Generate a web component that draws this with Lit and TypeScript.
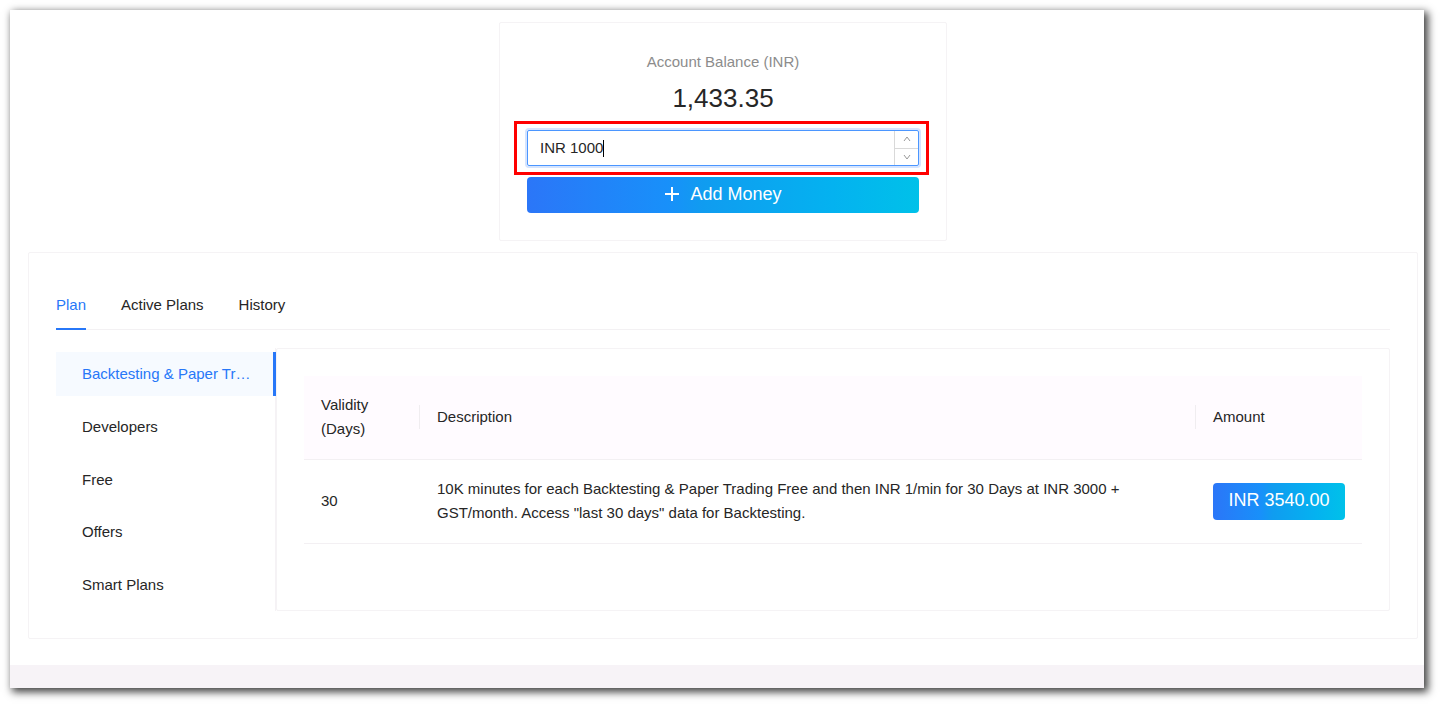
import { LitElement, html, css } from "lit";
import { customElement, state } from "lit/decorators.js";

const sections = ["Backtesting & Paper Trading", "Developers", "Free", "Offers", "Smart Plans"];
const tabs = ["Plan", "Active Plans", "History"];
const plans = [
  {
    days: 30,
    description:
      '10K minutes for each Backtesting & Paper Trading Free and then INR 1/min for 30 Days at INR 3000 + GST/month. Access "last 30 days" data for Backtesting.',
    amount: "INR 3540.00",
  },
];

@customElement("app-root")
export class AppRoot extends LitElement {
  @state() tab = 0;
  @state() section = 0;
  @state() amount = 1000;

  static styles = css`
    * { box-sizing: border-box; }
    :host {
      display: block;
      padding: 10px 16px 16px 10px;
      background: #fff;
      color: #262626;
      font: 15px/24px "Liberation Sans", Arial, sans-serif;
    }
    button, input { font: inherit; color: inherit; border: 0; margin: 0; padding: 0; background: none; }
    button { cursor: pointer; }
    .page {
      background: #fff;
      box-shadow: 3px 3px 8px 1px rgba(0, 0, 0, 0.75);
    }
    main {
      display: flex;
      flex-direction: column;
      gap: 11px;
      padding: 12px 6px 26px 18px;
    }
    .card { border: 1px solid #f5f3f5; border-radius: 2px; padding: 27px; }
    .balance {
      align-self: center;
      display: flex;
      flex-direction: column;
      width: 448px;
      max-width: 100%;
      text-align: center;
    }
    .caption { color: #8c8c8c; }
    .value { font-size: 26px; line-height: 40px; margin: 4px 0 12px; }
    .field {
      position: relative;
      display: flex;
      height: 36px;
      margin-bottom: 11px;
      border: 1px solid #4b96ff;
      border-radius: 2px;
      box-shadow: 0 0 0 2px #d5e4fe;
    }
    .field::after {
      content: "";
      position: absolute;
      inset: -10px -11px -10px -14px;
      border: 3px solid #f00;
      pointer-events: none;
    }
    .entry { flex: 1; display: flex; align-items: center; padding-left: 12px; cursor: text; }
    .entry input { field-sizing: content; width: auto; outline: 0; caret-color: transparent; }
    .caret { width: 1px; height: 17px; background: #000; }
    .steps { display: flex; flex-direction: column; width: 24px; border-left: 1px solid #d9d9d9; }
    .steps button { flex: 1; display: grid; place-items: center; }
    .steps button + button { border-top: 1px solid #d9d9d9; }
    .steps svg { width: 8px; height: 8px; fill: none; stroke: #999; stroke-width: 1; }
    .primary {
      display: flex;
      align-items: center;
      justify-content: center;
      gap: 10px;
      height: 36px;
      padding: 0 16px 2px;
      border-radius: 4px;
      background: linear-gradient(90deg, #2b76f8, #1890fa 36%, #109cf0 45%, #04b2f0 78%, #00c1e9);
      color: #fff;
      font-size: 18px;
      white-space: nowrap;
    }
    .primary svg { width: 16px; height: 16px; stroke: #fff; stroke-width: 2; }
    .tabs { display: flex; gap: 35px; border-bottom: 1px solid #f3f1f3; }
    .tabs button { padding: 13px 0 11px; border-bottom: 2px solid transparent; margin-bottom: -1px; }
    .tabs .on { color: #2777f8; border-color: #2777f8; }
    .body { display: flex; padding-top: 18px; }
    nav {
      display: flex;
      flex-direction: column;
      justify-content: space-between;
      width: 220px;
      flex: none;
      padding: 4px 0;
      box-shadow: inset -1px 0 #f5f2f5;
    }
    nav button {
      height: 44px;
      padding: 0 17px 0 26px;
      border-right: 3px solid transparent;
      text-align: left;
      white-space: nowrap;
      overflow: hidden;
      text-overflow: ellipsis;
    }
    nav .on { background: #f6faff; color: #2777f8; border-color: #2777f8; }
    .plans { flex: 1; padding-bottom: 66px; }
    table { width: 100%; border-collapse: separate; border-spacing: 0; text-align: left; }
    th, td { padding: 17px 17px 18px; border-bottom: 1px solid #f3f0f3; font-weight: 400; }
    th { background: #fffbff; }
    th.split { padding-right: 0; }
    th.split div { display: flex; align-items: center; justify-content: space-between; gap: 16px; }
    th.split div::after { content: ""; flex: none; width: 1px; height: 24px; background: #f0edf0; }
    .days { width: 116px; }
    .amount { width: 166px; }
    td .primary { width: 132px; height: 37px; }
    footer { height: 23px; background: #f7f3f7; }
  `;

  render() {
    return html`
      <div class="page">
        <main>
          <section class="card balance">
            <label class="caption" for="amount">Account Balance (INR)</label>
            <div class="value">1,433.35</div>
            <div class="field">
              <label class="entry">
                <input id="amount" aria-label="Amount" .value=${`INR ${this.amount}`}
                  @change=${(e: Event) => {
                    this.amount = Number((e.target as HTMLInputElement).value.replace(/\D/g, ""));
                  }} />
                <span class="caret"></span>
              </label>
              <div class="steps">
                <button aria-label="Increase" @click=${() => this.amount++}>
                  <svg viewBox="0 0 8 8"><path d="M1 6 4 2 7 6" /></svg>
                </button>
                <button aria-label="Decrease" @click=${() => this.amount--}>
                  <svg viewBox="0 0 8 8"><path d="M1 2 4 6 7 2" /></svg>
                </button>
              </div>
            </div>
            <button class="primary">
              <svg viewBox="0 0 16 16"><path d="M8 1V15M1 8H15" /></svg>
              Add Money
            </button>
          </section>

          <section class="card">
            <div class="tabs" role="tablist">
              ${tabs.map((t, i) => html`<button role="tab" aria-selected=${i === this.tab}
                class=${i === this.tab ? "on" : ""} @click=${() => (this.tab = i)}>${t}</button>`)}
            </div>
            <div class="body">
              <nav>
                ${sections.map((s, i) => html`<button class=${i === this.section ? "on" : ""}
                  @click=${() => (this.section = i)}>${s}</button>`)}
              </nav>
              <div class="card plans">
                <table>
                  <thead>
                    <tr>
                      <th class="days split"><div>Validity (Days)</div></th>
                      <th class="split"><div>Description</div></th>
                      <th class="amount">Amount</th>
                    </tr>
                  </thead>
                  <tbody>
                    ${plans.map((p) => html`<tr>
                      <td>${p.days}</td>
                      <td>${p.description}</td>
                      <td><button class="primary">${p.amount}</button></td>
                    </tr>`)}
                  </tbody>
                </table>
              </div>
            </div>
          </section>
        </main>
        <footer></footer>
      </div>
    `;
  }
}
